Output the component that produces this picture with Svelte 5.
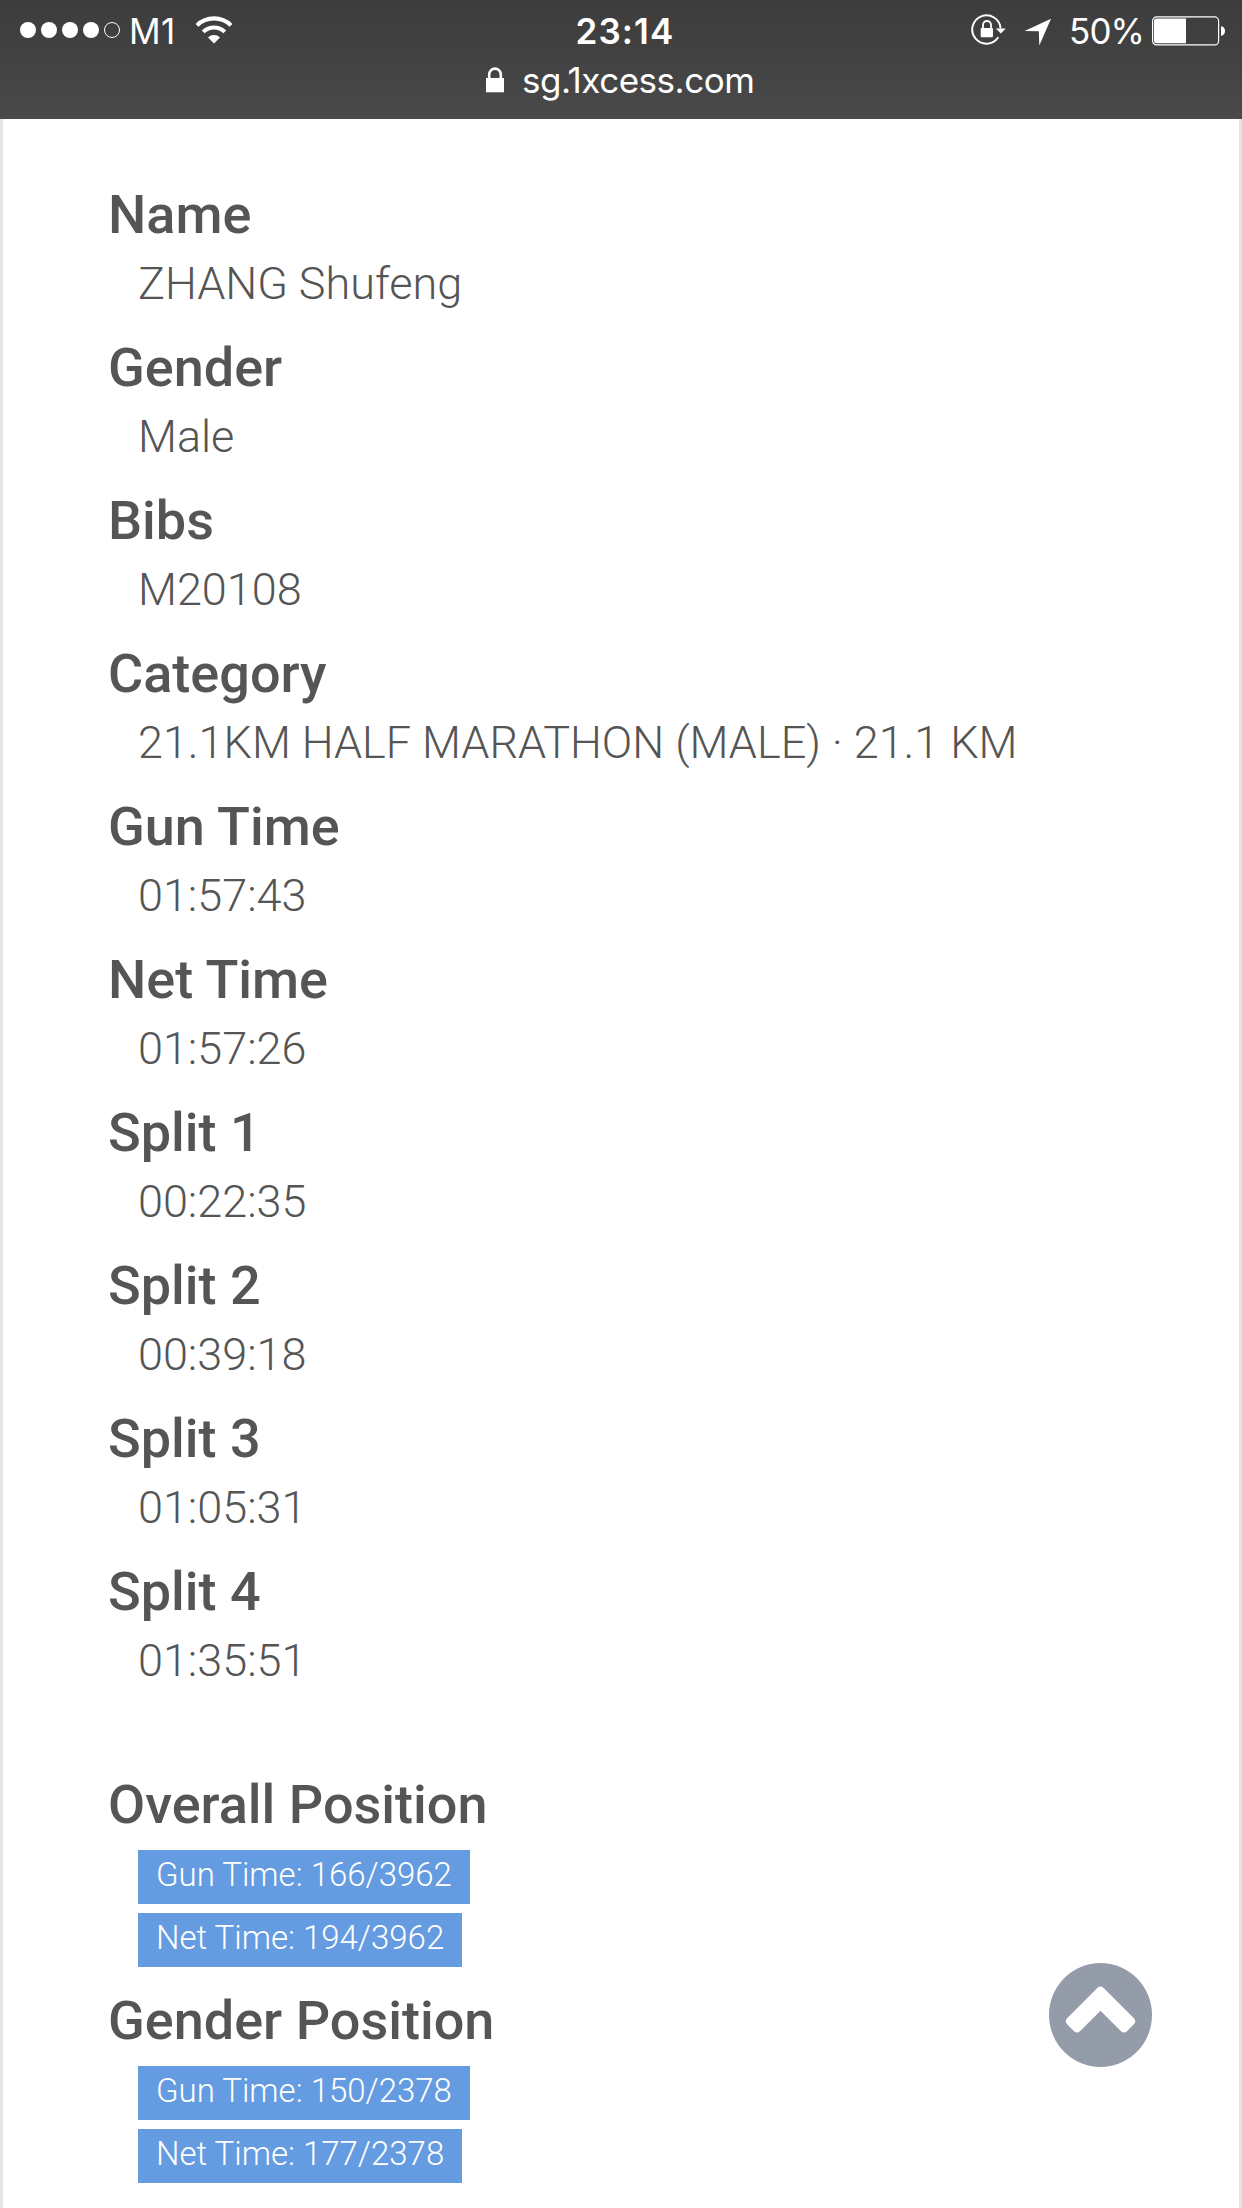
<script>
  const details = [
    ['Name', 'ZHANG Shufeng'],
    ['Gender', 'Male'],
    ['Bibs', 'M20108'],
    ['Category', '21.1KM HALF MARATHON (MALE) · 21.1 KM'],
    ['Gun Time', '01:57:43'],
    ['Net Time', '01:57:26'],
    ['Split 1', '00:22:35'],
    ['Split 2', '00:39:18'],
    ['Split 3', '01:05:31'],
    ['Split 4', '01:35:51'],
  ];
  const positions = [
    { label: 'Overall Position', times: ['Gun Time: 166/3962', 'Net Time: 194/3962'] },
    { label: 'Gender Position', times: ['Gun Time: 150/2378', 'Net Time: 177/2378'] },
  ];
</script>

<div class="screen">
  <header>
    <div class="status">
      <div class="left">
        <svg class="signal" width="101" height="18" viewBox="0 0 101 18" fill="#fff">
          <circle cx="8" cy="9" r="8" />
          <circle cx="29" cy="9" r="8" />
          <circle cx="50" cy="9" r="8" />
          <circle cx="71" cy="9" r="8" />
          <circle cx="92" cy="9" r="7.5" fill="none" stroke="#fff" />
        </svg>
        <span class="carrier">M1</span>
        <svg class="wifi" width="38" height="28" viewBox="0 0 38 28">
          <g fill="none" stroke="#fff" stroke-width="4.1">
            <path d="M2 9.4A24.2 24.2 0 0 1 36 9.4" />
            <path d="M8.2 15.9A15.5 15.5 0 0 1 29.8 15.9" />
          </g>
          <path fill="#fff" d="M13 21.4A8.7 8.7 0 0 1 25 21.4L19 27.6Z" />
        </svg>
      </div>
      <div class="clock">23:14</div>
      <div class="right">
        <svg class="rotation" width="36" height="32" viewBox="0 0 36 32">
          <path d="M27.3 23.3A14.2 14.2 0 1 1 29.6 14.5" fill="none" stroke="#fff" stroke-width="1.9" />
          <path d="M24.8 14.6H34.8L29.8 19.6Z" fill="#fff" />
          <rect x="9.7" y="14" width="12.3" height="9.3" rx="1" fill="#fff" />
          <path d="M12 14.5V11A4 4 0 0 1 20 11V14.5" fill="none" stroke="#fff" stroke-width="1.8" />
        </svg>
        <svg class="arrow" width="28" height="28" viewBox="0 0 28 28" fill="#fff">
          <path d="M27 .8L.5 13L14.8 13.3L15.3 27.6Z" />
        </svg>
        <span class="percent">50%</span>
        <svg class="battery" width="74" height="30" viewBox="0 0 74 30">
          <rect x=".6" y=".9" width="66" height="28" rx="4" fill="none" stroke="#fff" stroke-width="1.2" />
          <path fill="#fff" d="M4.5 2.5H34V27.3H4.5Q2 27.3 2 24.8V5Q2 2.5 4.5 2.5Z" />
          <path fill="#fff" d="M69 10.3Q73 11 73 15T69 20Z" />
        </svg>
      </div>
    </div>
    <div class="address">
      <svg width="18" height="26" viewBox="0 0 18 26">
        <rect y="11" width="18" height="14.3" fill="#fff" />
        <path d="M3.2 12V7.4A5.8 5.8 0 0 1 14.8 7.4V12" fill="none" stroke="#fff" stroke-width="2.6" />
      </svg>
      <span>sg.1xcess.com</span>
    </div>
  </header>

  <main>
    <dl>
      {#each details as [label, value]}
        <dt>{label}</dt>
        <dd>{value}</dd>
      {/each}
    </dl>
    <dl class="positions">
      {#each positions as group}
        <dt>{group.label}</dt>
        <dd class="badges">
          {#each group.times as time}
            <span class="badge">{time}</span>
          {/each}
        </dd>
      {/each}
    </dl>
  </main>

  <button class="top" aria-label="Back to top">
    <svg width="103" height="104" viewBox="0 0 103 104">
      <ellipse cx="51.5" cy="52" rx="51.5" ry="52" fill="#949ca9" />
      <path d="M48.3 25Q51.5 22.2 54.7 25L84.9 55.2Q87.6 58.2 84.9 61.2L78.2 68Q75 71 71.8 68L51.5 47.8L31.2 68Q28 71 24.8 68L18.1 61.2Q15.4 58.2 18.1 55.2Z" fill="#fff" />
    </svg>
  </button>
</div>

<style>
  :global(body) { margin: 0; }
  .screen {
    position: relative;
    box-sizing: border-box;
    width: 1242px;
    height: 2208px;
    overflow: hidden;
    background: #fff;
    color: #555;
    font-family: Roboto, sans-serif;
  }
  header {
    height: 119px;
    background: linear-gradient(#3d3d3d, #424242 50%, #4a4a4a);
    color: #fff;
    font-family: Inter, "Liberation Sans", sans-serif;
    font-size: 35px;
  }
  .status {
    display: grid;
    grid-template-columns: 1fr auto 1fr;
    align-items: center;
    height: 63px;
    padding: 0 16px 0 20px;
    box-sizing: border-box;
  }
  .left, .right, .address { display: flex; align-items: center; }
  .right { justify-content: flex-end; }
  svg { display: block; flex: none; }
  .signal { margin-top: -3px; }
  .carrier { margin: -2px 0 0 8px; width: 66px; letter-spacing: 0.3px; }
  .wifi { margin-top: -4px; }
  .clock { margin-top: -2px; padding-left: 4px; font-weight: 600; letter-spacing: 1.1px; }
  .rotation { margin: -3px 17px 0 0; }
  .arrow { margin-right: 17px; }
  .percent { width: 73px; margin: -2px 10px 0 0; letter-spacing: -0.9px; white-space: nowrap; }
  .rotation, .arrow { transform: translateX(0); }
  .battery { margin-top: -2px; }
  .address { height: 33px; padding-left: 486px; }
  .address span { margin-left: 18px; letter-spacing: -0.48px; }
  main {
    box-sizing: border-box;
    height: 2089px;
    padding: 58px 0 0 105px;
    border: solid #e5e5e5;
    border-width: 0 3px;
  }
  dl { margin: 0; }
  dt { font-size: 54px; font-weight: 500; line-height: 75px; }
  dd {
    margin: 0 0 14px 30px;
    font-size: 45px;
    font-weight: 300;
    line-height: 64px;
    letter-spacing: -0.03px;
  }
  .positions { margin-top: 74px; }
  .badges {
    display: flex;
    flex-direction: column;
    align-items: flex-start;
    gap: 9px;
    margin-bottom: 16px;
    padding-top: 8px;
    letter-spacing: 0;
  }
  .badge {
    padding: 0 18px 4px;
    background: #659be0;
    color: #fff;
    font-size: 33px;
    line-height: 50px;
  }
  .top {
    position: absolute;
    top: 1963px;
    left: 1049px;
    padding: 0;
    border: 0;
    background: none;
  }
</style>
